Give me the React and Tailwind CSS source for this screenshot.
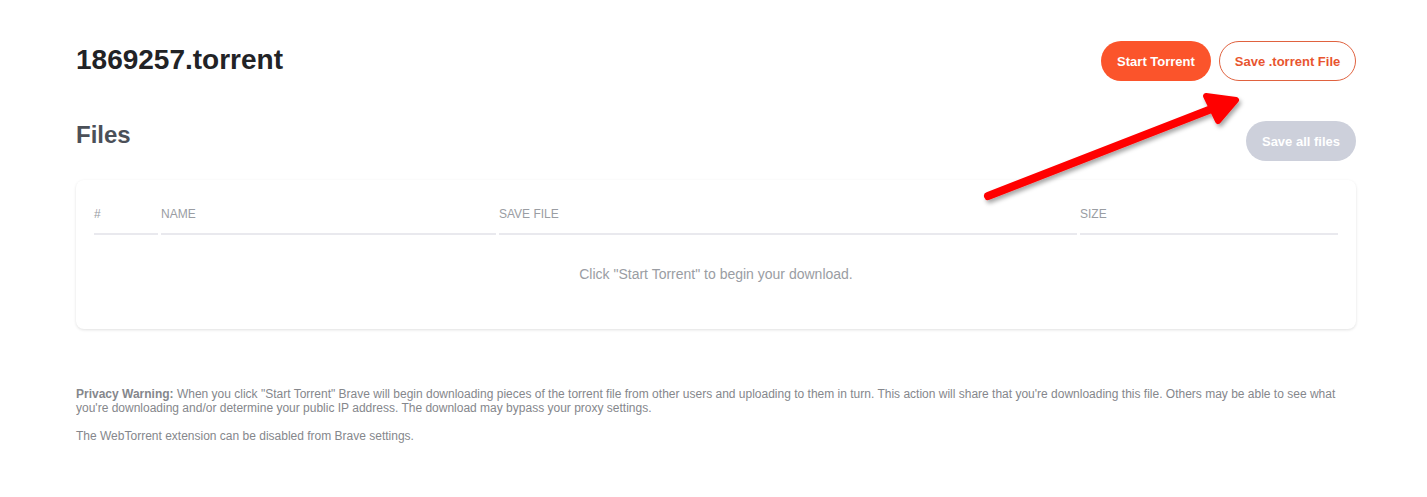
import React from 'react';

const columns = [
  { label: '#', width: 'w-[64px]' },
  { label: 'Name', width: 'w-[335px]' },
  { label: 'Save file', width: 'w-[578px]' },
  { label: 'Size', width: 'flex-1' },
];

function Arrow() {
  return (
    <svg
      className="absolute left-0 top-0 pointer-events-none"
      width="1427"
      height="497"
      viewBox="0 0 1427 497"
    >
      <defs>
        <filter id="shadow" x="-20%" y="-20%" width="140%" height="140%">
          <feDropShadow dx="2" dy="3" stdDeviation="2" floodColor="#000" floodOpacity="0.35" />
        </filter>
      </defs>
      <g filter="url(#shadow)" fill="#ff0000" stroke="#ff0000" strokeLinejoin="round" strokeLinecap="round">
        <line x1="988" y1="196" x2="1214" y2="108" strokeWidth="8" />
        <polygon points="1236,100 1206,96 1218,121" strokeWidth="6" />
      </g>
    </svg>
  );
}

export default function App() {
  return (
    <div className="relative w-[1427px] h-[497px] bg-white font-['Liberation_Sans',Arial,sans-serif] pl-[76px] pr-[71px] pt-[41px]">
      <div className="flex items-center justify-between h-[40px]">
        <h1 className="text-[28px] leading-[32px] font-bold text-[#222326] mt-[-3px]">1869257.torrent</h1>
        <div className="flex items-center gap-[8px]">
          <button
            type="button"
            className="h-[40px] w-[110px] pt-[2px] rounded-full bg-[#fb542b] text-white text-[13px] font-bold"
          >
            Start Torrent
          </button>
          <button
            type="button"
            className="h-[40px] w-[137px] pt-[2px] rounded-full border border-[#e0623f] bg-white text-[#e8552f] text-[13px] font-bold"
          >
            Save .torrent File
          </button>
        </div>
      </div>

      <div className="flex items-start justify-between mt-[39px]">
        <h2 className="text-[24px] leading-[28px] font-bold text-[#4b5058] mt-[1px]">Files</h2>
        <button
          type="button"
          className="mt-[1px] h-[40px] w-[110px] pt-[2px] rounded-full bg-[#cdd0db] text-white text-[13px] font-bold"
        >
          Save all files
        </button>
      </div>

      <div className="mt-[19px] h-[149px] rounded-[8px] bg-white shadow-[0_1px_3px_rgba(0,0,0,0.12)] px-[18px] pt-[27px]">
        <div className="flex gap-[3px]">
          {columns.map((col) => (
            <div
              key={col.label}
              className={`${col.width} border-b-2 border-[#e9e9ee] pb-[12px] text-[12px] leading-[14px] uppercase text-[#9a9da3]`}
            >
              {col.label}
            </div>
          ))}
        </div>
        <p className="mt-[31px] text-center text-[14px] leading-[16px] text-[#9a9da3]">
          Click "Start Torrent" to begin your download.
        </p>
      </div>

      <div className="mt-[58px] text-[12px] leading-[14px] text-[#85878c]">
        <p>
          <span className="font-bold">Privacy Warning:</span> When you click "Start Torrent" Brave will begin
          downloading pieces of the torrent file from other users and uploading to them in turn. This action will
          share that you're downloading this file. Others may be able to see what you're downloading and/or
          determine your public IP address. The download may bypass your proxy settings.
        </p>
        <p className="mt-[14px]">The WebTorrent extension can be disabled from Brave settings.</p>
      </div>

      <Arrow />
    </div>
  );
}
